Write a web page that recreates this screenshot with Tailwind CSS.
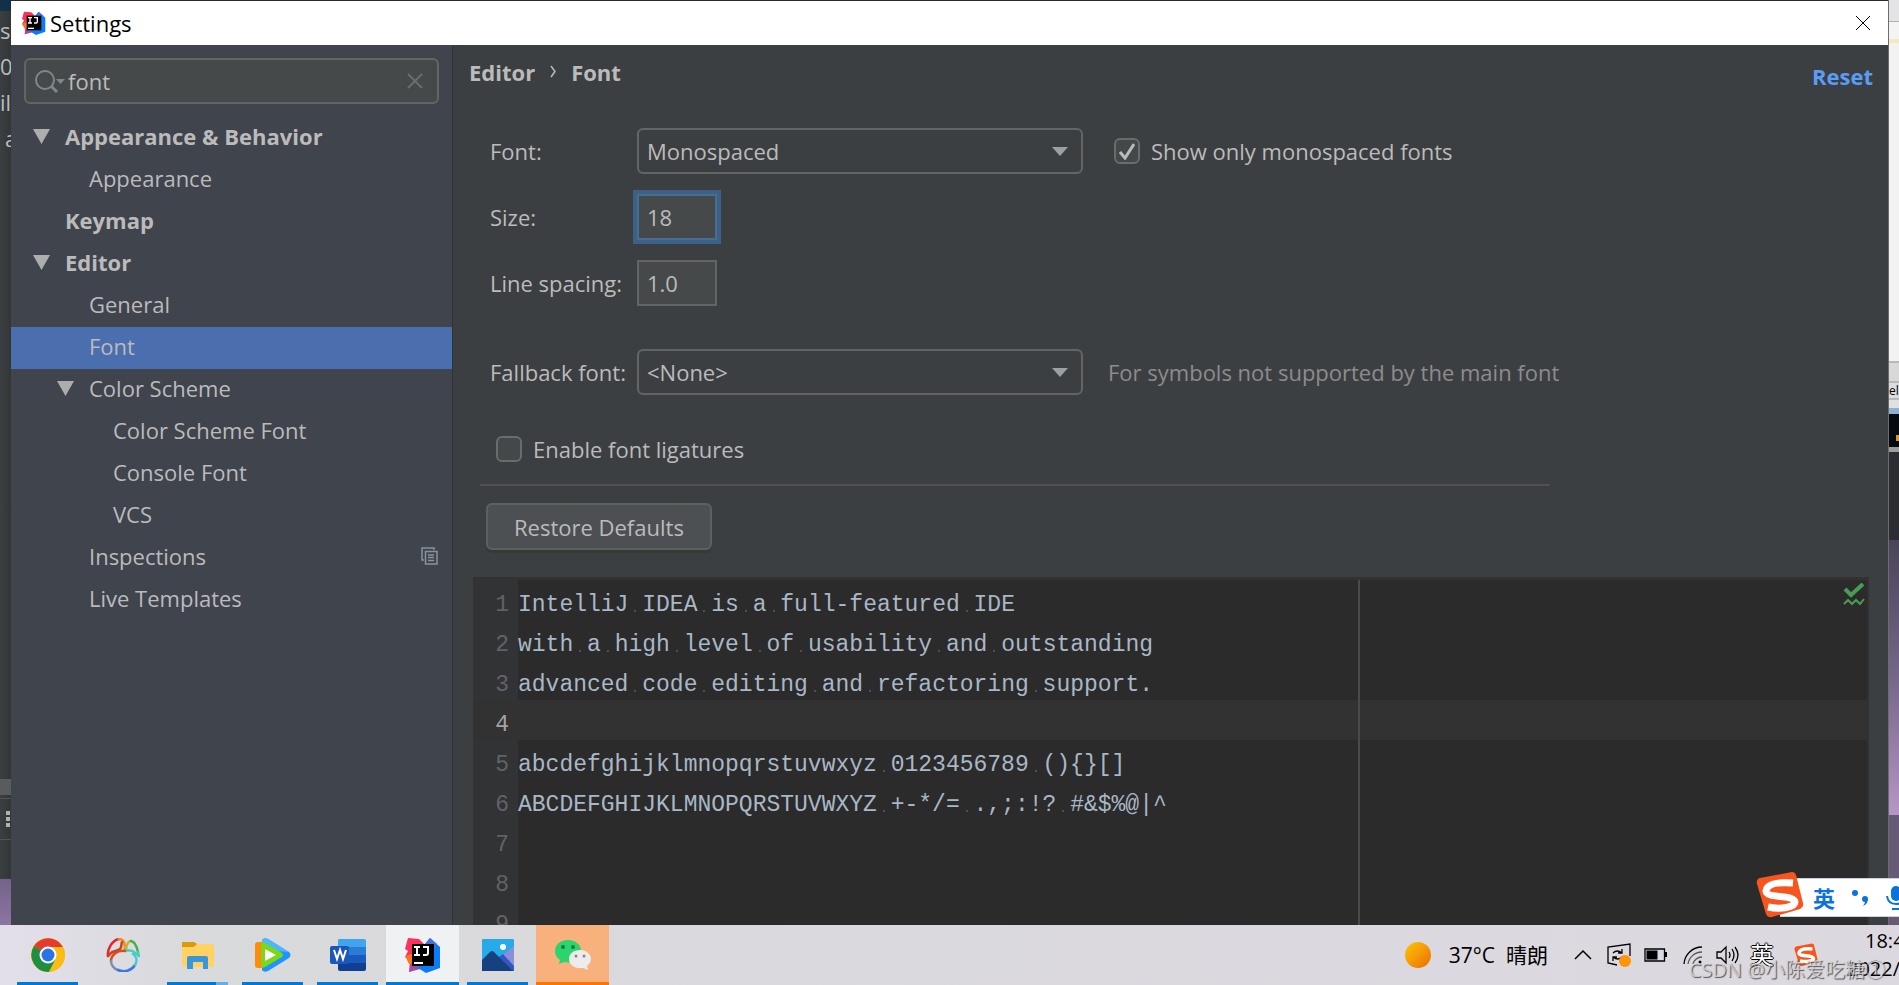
<!DOCTYPE html>
<html lang="en">
<head>
    <meta charset="UTF-8" />
    <meta name="viewport" content="width=device-width, initial-scale=1.0"/>
    <title>Settings</title>
    <script src="https://cdn.jsdelivr.net/npm/@tailwindcss/browser@4"></script>
</head>
<body class="h-screen overflow-hidden flex flex-col bg-[#3c3f41] text-[#bbbbbb] text-[22px] leading-[30px] font-['Open_Sans','Noto_Sans_CJK_SC',sans-serif]">

<!-- Shared shapes -->
<svg class="hidden">
    <symbol id="ij" viewBox="0 0 36 36">
        <path d="M3 1l11 1 6 6-4 22L4 35l1-11L0 20l3-6-3-2z" fill="#fe315d"/>
        <path d="M1 19l8-3 2 10-7 1-2-4z" fill="#f97a12"/>
        <path d="M4 35l3-10 12 6z" fill="#9a4fa8"/>
        <path d="M20 7l5-6 10 9v21l-14 5-8-5z" fill="#087cfa"/>
        <path d="M20 7l5-6 7 6-3 6h-9z" fill="#4a6fdc"/>
        <path d="M7 7h22v22H7z" fill="#000"/>
        <path d="M9 10h6M12 10v8M9 18h6M18 10h5v6q0 2-2 2h-3" fill="none" stroke="#fff" stroke-width="2"/>
        <path d="M9 25h9v2H9z" fill="#fff"/>
    </symbol>
    <symbol id="sogou" viewBox="0 0 48 46">
        <path d="M4 6L36 0q3 0 4 3l7 28q1 4-3 6-13 4-28 8-4 1-6-3L1 12q-1-5 3-6z" fill="#f7551d"/>
        <path d="M37 11Q11 9 10 19c0 8 28 3 29 11 0 5-14 8-27 5" fill="none" stroke="#fff" stroke-width="7"/>
    </symbol>
    <symbol id="open" viewBox="0 0 17 15">
        <path d="M0 0h17L8.500 15z" fill="#adadad"/>
    </symbol>
</svg>

<div class="flex-1 min-h-0 flex">

    <!-- Window behind, left edge -->
    <div class="w-[11px] shrink-0 overflow-hidden flex flex-col whitespace-nowrap bg-linear-to-r from-[#3c3f41] to-[#333637]">
        <div class="h-[11px] bg-[#123049]"></div>
        <p class="pt-1 h-9">s</p>
        <p class="pt-1 h-9">0</p>
        <p class="pt-1 h-9">il</p>
        <p class="pt-1 h-9 pl-[5px]">a</p>
        <div class="flex-1"></div>
        <div class="h-4 bg-[#595b5d]"></div>
        <div class="h-[3px]"></div>
        <div class="h-[42px] border-y border-[#515355] flex flex-col items-end justify-center gap-[2px] pr-px">
            <i class="size-1 bg-[#afb1b3]"></i>
            <i class="size-1 bg-[#afb1b3]"></i>
            <i class="size-1 bg-[#afb1b3]"></i>
        </div>
        <div class="h-[39px]"></div>
        <div class="h-[46px] bg-linear-to-b from-[#75638a] to-[#8b75a4]"></div>
    </div>

    <!-- Settings window -->
    <div class="flex-1 min-w-0 flex flex-col border-t border-[#2b2b2b]">
        <header class="h-[44px] shrink-0 bg-white text-black flex items-center pl-[11px] pr-[17px]">
            <svg class="size-6 mr-1"><use href="#ij"/></svg>
            <h1 class="flex-1">Settings</h1>
            <button aria-label="Close">
                <svg class="size-4" viewBox="0 0 16 16"><path d="M1 1l14 14M15 1L1 15" stroke="#000" fill="none"/></svg>
            </button>
        </header>

        <div class="flex-1 min-h-0 flex">
            <!-- Sidebar -->
            <aside class="w-[442px] shrink-0 bg-[#40444d] border-r border-[#323232]">
                <div class="m-[13px] h-[46px] flex items-center pl-[9px] pr-[14px] border-2 border-[#646464] rounded-md bg-[#45494a]">
                    <svg class="w-[30px] h-6 shrink-0" viewBox="0 0 30 24" fill="none" stroke="#7b8890" stroke-width="2">
                        <circle cx="10" cy="11" r="9"/>
                        <path d="M16 17l6 6" stroke-width="3"/>
                        <path d="M21 10h9l-4.500 5z" fill="#7b8890" stroke="none"/>
                    </svg>
                    <input class="flex-1 min-w-0 pl-[3px] outline-none" aria-label="Search settings" value="font">
                    <button aria-label="Clear">
                        <svg class="size-4" viewBox="0 0 16 16"><path d="M1 1l14 14M15 1L1 15" stroke="#656e73" stroke-width="2" fill="none"/></svg>
                    </button>
                </div>
                <nav class="leading-[38px]">
                    <a href="#" class="flex items-center pb-1 pl-[22px] font-bold"><svg class="w-[17px] h-[15px] mr-[15px]"><use href="#open"/></svg>Appearance &amp; Behavior</a>
                    <a href="#" class="block pb-1 pl-[78px]">Appearance</a>
                    <a href="#" class="block pb-1 pl-[54px] font-bold">Keymap</a>
                    <a href="#" class="flex items-center pb-1 pl-[22px] font-bold"><svg class="w-[17px] h-[15px] mr-[15px]"><use href="#open"/></svg>Editor</a>
                    <a href="#" class="block pb-1 pl-[78px]">General</a>
                    <a href="#" class="block pb-1 pl-[78px] bg-[#4b6eaf]">Font</a>
                    <a href="#" class="flex items-center pb-1 pl-[46px]"><svg class="w-[17px] h-[15px] mr-[15px]"><use href="#open"/></svg>Color Scheme</a>
                    <a href="#" class="block pb-1 pl-[102px]">Color Scheme Font</a>
                    <a href="#" class="block pb-1 pl-[102px]">Console Font</a>
                    <a href="#" class="block pb-1 pl-[102px]">VCS</a>
                    <a href="#" class="flex items-center justify-between pb-1 pl-[78px] pr-[14px]">Inspections
                        <svg class="w-[17px] h-[18px]" viewBox="0 0 17 18" fill="none" stroke="#87939a" stroke-width="1.500">
                            <path d="M3 13H1V1h12v2M4.500 4.500h11.500v12.500h-11.500zM7 8h6M7 10.500h6M7 13.500h6"/>
                        </svg>
                    </a>
                    <a href="#" class="block pb-1 pl-[78px]">Live Templates</a>
                </nav>
            </aside>

            <!-- Font page -->
            <main class="flex-1 min-w-0 flex flex-col pl-5 pr-[19px]">
                <div class="flex justify-between items-start font-bold pt-3 h-[83px] shrink-0">
                    <div class="flex items-start -ml-1">
                        <span>Editor</span>
                        <svg class="w-[6px] h-[13px] mt-2 mx-[15px]" viewBox="0 0 6 13"><path d="M1 1l4 5.500L1 12" fill="none" stroke="#bbb" stroke-width="1.500"/></svg>
                        <span>Font</span>
                    </div>
                    <a href="#" class="mt-1 -mr-1 text-[#589df6]">Reset</a>
                </div>

                <form class="flex-1 min-h-0 flex flex-col">
                    <div class="grid grid-cols-[147px_auto_1fr] gap-y-5 items-center pl-[17px]">
                        <label for="font">Font:</label>
                        <div class="grid items-center w-[446px]">
                            <select id="font" class="col-start-1 row-start-1 appearance-none h-[46px] pl-2 border-2 border-[#646464] rounded-md bg-[#3c3f41]">
                                <option>Monospaced</option>
                            </select>
                            <svg class="col-start-1 row-start-1 justify-self-end mr-[15px] w-4 h-[9px] pointer-events-none" viewBox="0 0 16 9"><path d="M0 0h16L8 9z" fill="#9da0a2"/></svg>
                        </div>
                        <label class="flex items-center pl-[31px]">
                            <span class="grid place-items-center mr-[11px]">
                                <input type="checkbox" checked class="col-start-1 row-start-1 appearance-none size-[26px] border-2 border-[#6b6b6b] rounded-md bg-[#43494a]">
                                <svg class="col-start-1 row-start-1 w-4 h-[17px] pointer-events-none" viewBox="0 0 16 17"><path d="M1 9l5 6L15 1" fill="none" stroke="#bbb" stroke-width="3"/></svg>
                            </span>
                            Show only monospaced fonts
                        </label>

                        <label for="size">Size:</label>
                        <input id="size" value="18" class="col-span-2 w-20 h-[46px] pl-2 border-2 border-[#466d94] ring-4 ring-[#3d6185] bg-[#45494a] outline-none">

                        <label for="spacing">Line spacing:</label>
                        <input id="spacing" value="1.0" class="col-span-2 w-20 h-[46px] pl-2 border-2 border-[#646464] bg-[#45494a] outline-none">
                    </div>

                    <div class="grid grid-cols-[147px_auto_1fr] items-center pl-[17px] mt-[43px]">
                        <label for="fallback" class="whitespace-nowrap">Fallback font:</label>
                        <div class="grid items-center w-[446px]">
                            <select id="fallback" class="col-start-1 row-start-1 appearance-none h-[46px] pl-2 border-2 border-[#646464] rounded-md bg-[#3c3f41]">
                                <option>&lt;None&gt;</option>
                            </select>
                            <svg class="col-start-1 row-start-1 justify-self-end mr-[15px] w-4 h-[9px] pointer-events-none" viewBox="0 0 16 9"><path d="M0 0h16L8 9z" fill="#9da0a2"/></svg>
                        </div>
                        <span class="pl-[25px] text-[#8c8c8c]">For symbols not supported by the main font</span>
                    </div>

                    <label class="flex items-center pl-[23px] mt-[39px]">
                        <input type="checkbox" class="appearance-none size-[26px] mr-[11px] border-2 border-[#6b6b6b] rounded-md bg-[#43494a]">
                        Enable font ligatures
                    </label>
                    <hr class="mt-5 ml-[7px] mr-[319px] border-t-2 border-[#515151]">
                    <button type="button" class="self-start ml-[13px] mt-[17px] mb-[27px] h-[47px] px-[26px] border-2 border-[#5e6060] rounded-md bg-[#4c5052] shadow-[0_3px_0_#36393a]">Restore Defaults</button>

                    <!-- Preview -->
                    <div class="relative flex-1 min-h-0 overflow-hidden border-t-[3px] border-r-2 border-[#323232] bg-[#2b2b2b] font-['Liberation_Mono',monospace] text-[23px] leading-[30px]">
                        <div id="preview"></div>
                        <div class="absolute inset-y-0 left-[885px] w-[2px] bg-[#4a4a4a]"></div>
                        <svg class="absolute top-[3px] right-[2px] w-[22px] h-[22px]" viewBox="0 0 22 22" fill="none" stroke="#499c54">
                            <path d="M2 6l6 6L20 1" stroke-width="4"/>
                            <path d="M1 21l4-4 4 4 4-4 4 4 4-5" stroke-width="2"/>
                        </svg>
                    </div>
                </form>
            </main>
        </div>
    </div>

    <!-- Windows behind, right edge -->
    <div class="w-[11px] shrink-0 overflow-hidden flex flex-col border-l border-[#6d6d6d]">
        <div class="h-[22px] bg-[#e4e4e6] border-b border-[#b0b0b0]"></div>
        <div class="h-[17px] bg-[#f4f4f4]"></div>
        <div class="h-1 bg-[#f3e9c0]"></div>
        <div class="h-[318px] bg-[#f2f2f2]"></div>
        <div class="h-5 bg-[#d8d8d8] border-t-2 border-[#b8b8b8]"></div>
        <div class="h-[19px] bg-[#dcdcdc] border-y-2 border-[#b8b8b8] text-xs leading-4 text-black">el</div>
        <div class="h-2 bg-[#e0e0e0]"></div>
        <div class="h-[6px] bg-[#8fb0cc]"></div>
        <div class="h-[33px] bg-[#050b10] flex items-end justify-end pb-[6px]"><i class="w-[3px] h-[6px] bg-[#d99a1c]"></i></div>
        <div class="h-[5px] bg-[#9d9d9d]"></div>
        <div class="h-[88px] bg-[#2c2c33]"></div>
        <div class="h-[275px] bg-linear-to-b from-[#4a4458] via-[#75678a] to-[#b697c6]"></div>
        <div class="flex-1 bg-[#675a75]"></div>
    </div>
</div>

<!-- Taskbar -->
<footer class="h-[60px] shrink-0 overflow-hidden flex items-stretch pl-[10px] text-black bg-linear-to-r from-[#e3dfea] via-[#d9dadc] via-10% to-[#dcd8e0]">
    <button aria-label="Chrome" class="w-[75px] flex flex-col items-center pt-[13px]">
        <svg class="size-[34px] mb-[10px] shrink-0" viewBox="0 0 34 34">
            <circle cx="17" cy="17" r="17" fill="#fbbc12"/>
            <path d="M17 17L3 8A17 17 0 0 1 32 9z" fill="#e33b2e"/>
            <path d="M3 8A17 17 0 0 0 18 34l7-13-8-4z" fill="#1f8e3e"/>
            <path d="M17 9h15A17 17 0 0 1 18 34l6-12z" fill="#fbbc12"/>
            <circle cx="17" cy="17" r="8.500" fill="#fff"/>
            <circle cx="17" cy="17" r="6.500" fill="#2a74e8"/>
        </svg>
        <i class="w-[61px] h-[3px] bg-[#0078d7]"></i>
    </button>
    <button aria-label="Navicat" class="w-[75px] flex flex-col items-center pt-[13px]">
        <svg class="size-[34px]" viewBox="0 0 34 34" fill="none" stroke-width="2.500" stroke-linecap="round" stroke-linejoin="round">
            <path d="M2 18C1 10 7 2 13 1" stroke="#e8202c"/>
            <path d="M13 1c5 0 6 4 6 12" stroke="#f08a20"/>
            <path d="M2 18l3-3C7 13 12 13 14 11s1-5 2-7" stroke="#d0421c"/>
            <path d="M20 12C20 8 22 3 25 3" stroke="#c8b030"/>
            <path d="M25 3c4 1 6 6 7 11" stroke="#43b049"/>
            <path d="M32 14l1 4-5-4c-2-2-5-1-8-2" stroke="#45d0b8"/>
            <path d="M19 13C11 12 5 17 5 23" stroke="#d0501c"/>
            <path d="M5 23c0 4 3 8 7 9" stroke="#7b8fb0"/>
            <path d="M12 32c7 3 14 0 17-5" stroke="#3b78e0"/>
            <path d="M29 27c3-5 1-9-2-11" stroke="#45c8d8"/>
        </svg>
    </button>
    <button aria-label="File Explorer" class="w-[75px] flex flex-col items-center pt-[13px]">
        <svg class="size-[34px] mb-[10px] shrink-0" viewBox="0 0 34 34">
            <path d="M1 9h12l3-3h15q2 0 2 2v19q0 2-2 2H3q-2 0-2-2z" fill="#ffd262"/>
            <path d="M1 4h12l3 2-3 3H1z" fill="#dc9a0a"/>
            <path d="M6 31V20q0-2 2-2h17q2 0 2 2v11h-5v-7H12v7z" fill="#3796dd"/>
        </svg>
        <i class="w-[61px] h-[3px] bg-linear-to-r from-[#0078d7] from-80% to-[#66aee8] to-80%"></i>
    </button>
    <button aria-label="Tencent Video" class="w-[75px] flex flex-col items-center pt-[13px]">
        <svg class="w-9 h-[34px] mb-[10px] shrink-0" viewBox="0 0 36 34">
            <path d="M7 2q2-3 6-1l21 13q3 3 0 6L13 33q-4 2-6-1z" fill="#1e93ff"/>
            <path d="M7 2q2-3 6-1l21 13L7 12z" fill="#4cb8fa"/>
            <path d="M0 7q0-3 3-3h5v26H3q-3 0-3-3z" fill="#ff8a0c"/>
            <path d="M6 7q0-4 4-2l17 10q2 2 0 4L10 29q-4 2-4-2z" fill="#7ad817"/>
            <path d="M10 11l11 6-11 6z" fill="#fff"/>
        </svg>
        <i class="w-[61px] h-[3px] bg-[#0078d7]"></i>
    </button>
    <button aria-label="Word" class="w-[75px] flex flex-col items-center pt-[13px]">
        <svg class="w-9 h-[34px] mb-[10px] shrink-0" viewBox="0 0 36 34">
            <path d="M9 1h25q2 0 2 2v6H8V3q0-2 1-2z" fill="#41a5ee"/>
            <path d="M8 9h28v8H8z" fill="#2b7cd3"/>
            <path d="M8 17h28v8H8z" fill="#185abd"/>
            <path d="M8 25h28v6q0 2-2 2H10q-2 0-2-2z" fill="#103f91"/>
            <rect y="8" width="19" height="18" rx="2" fill="#1a57b8"/>
            <path d="M4 12l3 9 3-9 3 9 3-9" fill="none" stroke="#fff" stroke-width="2"/>
        </svg>
        <i class="w-[61px] h-[3px] bg-[#0078d7]"></i>
    </button>
    <button aria-label="IntelliJ IDEA" class="w-[73px] mx-px flex flex-col items-center pt-3 bg-[#f0f1f3]">
        <svg class="size-9 mb-[9px] shrink-0"><use href="#ij"/></svg>
        <i class="w-full h-[3px] bg-[#0078d7]"></i>
    </button>
    <button aria-label="Photos" class="w-[75px] flex flex-col items-center pt-[13px]">
        <svg class="size-[34px] mb-[10px] shrink-0" viewBox="0 0 34 34">
            <rect x="1" y="1" width="32" height="32" rx="1" fill="#27aae8"/>
            <path d="M33 8v24L18 20z" fill="#8a8fd8"/>
            <path d="M11 24L22 16l11 12v5H15z" fill="#3357c0"/>
            <path d="M1 22l8-8q2-2 4 0l19 19H1z" fill="#15417f"/>
            <circle cx="22" cy="9" r="3" fill="#fff"/>
        </svg>
        <i class="w-[61px] h-[3px] bg-[#0078d7]"></i>
    </button>
    <button aria-label="WeChat" class="w-[73px] mx-px flex flex-col items-center pt-[13px] bg-[#f8b07c]">
        <svg class="w-9 h-[34px] mb-[10px] shrink-0" viewBox="0 0 36 34">
            <path d="M13 2C5 2 0 7 0 13c0 4 2 7 5 9l-1 4 5-2c12 2 17-4 17-11C26 7 21 2 13 2z" fill="#2bd46c"/>
            <path d="M25 12c-7 0-11 4-11 9 0 6 6 10 14 9l5 2-1-4c2-2 4-4 4-7 0-5-5-9-11-9z" fill="#ececec"/>
            <g fill="#1b7a40"><circle cx="8" cy="9" r="2"/><circle cx="18" cy="9" r="2"/></g>
            <g fill="#888"><circle cx="21" cy="18" r="1.500"/><circle cx="29" cy="18" r="1.500"/></g>
        </svg>
        <i class="w-full h-[3px] bg-[#ff7300]"></i>
    </button>

    <!-- Tray -->
    <div class="ml-auto flex items-center">
        <div class="size-[26px] rounded-full bg-linear-to-br from-[#fcc607] to-[#ea6a04]"></div>
        <span class="ml-[18px] text-[21px] whitespace-pre">37°C  晴朗</span>
        <button aria-label="Show hidden icons" class="ml-[26px]">
            <svg class="w-[18px] h-[10px]" viewBox="0 0 18 10"><path d="M1 9l8-8 8 8" fill="none" stroke="#000" stroke-width="1.500"/></svg>
        </button>
        <svg class="ml-[15px] size-6" viewBox="0 0 24 24" fill="none" stroke="#000" stroke-width="1.300">
            <path d="M10 22L1 20V4l22-3v12"/>
            <path d="M6 10q4-4 9 0M15 6v4h-4M15 14q-4 4-9 0M6 18v-4h4"/>
            <circle cx="18" cy="18" r="6" fill="#ff9406" stroke="none"/>
        </svg>
        <svg class="ml-[13px] w-[23px] h-[14px]" viewBox="0 0 23 14">
            <path d="M1 1h19.500v12H1z" fill="none" stroke="#000" stroke-width="1.300"/>
            <path d="M2.500 2.500h11v9h-11zM21 4h2v5h-2z"/>
        </svg>
        <svg class="ml-4 size-5" viewBox="0 0 20 20" fill="none" stroke="#000" stroke-width="1.300">
            <path d="M1 19A18 18 0 0 1 19 2"/>
            <path d="M5 19A14 14 0 0 1 19 7M10 19a9 9 0 0 1 9-7" stroke="#555"/>
            <circle cx="17" cy="17" r="1.500" fill="#000" stroke="none"/>
        </svg>
        <svg class="ml-[13px] w-6 h-5" viewBox="0 0 24 20" fill="none" stroke="#000" stroke-width="1.300">
            <path d="M1 7v6h4l5 5V2L5 7zM13 7q2 3 0 6M16 4q4 6 0 12M19 2q6 8 0 16"/>
        </svg>
        <span class="ml-[10px] text-[24px] text-white [text-shadow:1px_0_#000,-1px_0_#000,0_1px_#000,0_-1px_#000]">英</span>
        <svg class="ml-5 w-6 h-6"><use href="#sogou"/></svg>
        <div class="ml-[29px] w-[52px] flex flex-col items-start text-xl leading-[28px] whitespace-nowrap">
            <span class="ml-[18px]">18:4</span>
            <span>2022/</span>
        </div>
    </div>
</footer>

<!-- Input method bar -->
<div class="absolute right-0 bottom-[67px] w-[143px] h-[46px] overflow-hidden">
    <div class="absolute top-[6px] left-6 right-0 h-[39px] bg-white border-y border-[#c9d3e0] flex items-center gap-[17px] pl-[33px] text-[#0a72dc]">
        <span class="font-bold text-[22px]">英</span>
        <svg class="w-[17px] h-[18px] shrink-0" viewBox="0 0 17 18"><circle cx="3" cy="4" r="3" fill="#0a72dc"/><path d="M10 10a3 3 0 1 1 6 0q0 5-5 7 2-3 2-4-3 0-3-3z" fill="#0a72dc"/></svg>
        <svg class="w-5 h-6 shrink-0" viewBox="0 0 20 24"><rect x="5" y="0" width="10" height="15" rx="5" fill="#0a72dc"/><path d="M1 10q1 8 9 8t9-8M6 23h8" fill="none" stroke="#0a72dc" stroke-width="2"/></svg>
    </div>
    <svg class="absolute top-0 left-0 w-12 h-[46px]"><use href="#sogou"/></svg>
</div>

<p class="absolute right-[14px] bottom-[1px] text-xl text-[#dcdcdc]/80 whitespace-nowrap [text-shadow:1px_1px_1px_#555]">CSDN @小陈爱吃糖①</p>

<script>
    const lines = [
        "IntelliJ IDEA is a full-featured IDE",
        "with a high level of usability and outstanding",
        "advanced code editing and refactoring support.",
        "",
        "abcdefghijklmnopqrstuvwxyz 0123456789 (){}[]",
        "ABCDEFGHIJKLMNOPQRSTUVWXYZ +-*/= .,;:!? #&$%@|^",
        "", "", "",
    ];
    const current = 3;
    const space = '<span class="relative after:absolute after:left-[6px] after:bottom-[6px] after:size-[2px] after:bg-[#505050]"> </span>';

    document.getElementById("preview").innerHTML = lines.map((line, i) => {
        const text = line.replace(/&/g, "&amp;").replace(/ /g, space);
        const row = i === current ? "flex items-end h-10 bg-[#323232]" : "flex items-end h-10";
        const num = i === current
            ? "w-[45px] h-full flex items-end justify-end pr-[9px] shrink-0 text-[#a4a3a3]"
            : "w-[45px] h-full flex items-end justify-end pr-[9px] shrink-0 bg-[#313335] text-[#606366]";
        return `<div class="${row}"><span class="${num}">${i + 1}</span><code class="whitespace-pre font-['Liberation_Mono',monospace] text-[#a9b7c6]">${text}</code></div>`;
    }).join("");
</script>

</body>
</html>
